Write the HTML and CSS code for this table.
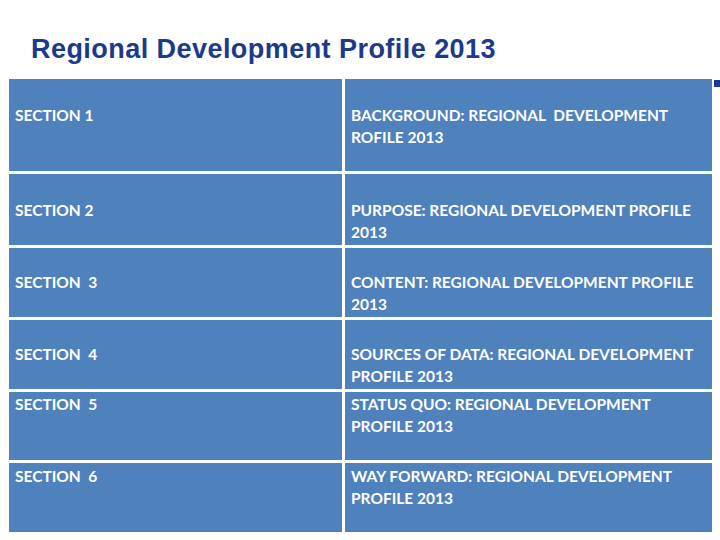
FILE: index.html
```html
<!DOCTYPE html>
<html>
<head>
<meta charset="utf-8">
<link rel="stylesheet" href="styles.css">
</head>
<body>
<div class="slide">
  <h1 class="title">Regional Development Profile 2013</h1>
  <div class="mark"></div>
  <div class="grid">
    <div class="cell r1">SECTION 1</div>
    <div class="cell r1">BACKGROUND: REGIONAL&nbsp; DEVELOPMENT<br>ROFILE 2013</div>
    <div class="cell r2">SECTION 2</div>
    <div class="cell r2">PURPOSE: REGIONAL DEVELOPMENT PROFILE<br>2013</div>
    <div class="cell r3">SECTION&nbsp; 3</div>
    <div class="cell r3">CONTENT: REGIONAL DEVELOPMENT PROFILE<br>2013</div>
    <div class="cell r3">SECTION&nbsp; 4</div>
    <div class="cell r3">SOURCES OF DATA: REGIONAL DEVELOPMENT<br>PROFILE 2013</div>
    <div class="cell r5">SECTION&nbsp; 5</div>
    <div class="cell r5">STATUS QUO: REGIONAL DEVELOPMENT<br>PROFILE 2013</div>
    <div class="cell r6">SECTION&nbsp; 6</div>
    <div class="cell r6">WAY FORWARD: REGIONAL DEVELOPMENT<br>PROFILE 2013</div>
  </div>
</div>
</body>
</html>
```
FILE: styles.css
```css
html, body {
  margin: 0;
  padding: 0;
  background: #ffffff;
}
.slide {
  position: relative;
  width: 720px;
  height: 540px;
  overflow: hidden;
}
.title {
  margin: 0;
  padding: 34px 0 0 31px;
  height: 45px;
  box-sizing: border-box;
  height: 79px;
  font-family: "Liberation Sans", Arial, sans-serif;
  font-weight: bold;
  font-size: 27px;
  letter-spacing: 0.45px;
  line-height: 30px;
  color: #1b3a8c;
}
.mark {
  position: absolute;
  left: 714px;
  top: 80px;
  width: 6px;
  height: 7px;
  background: #163a9a;
}
.grid {
  margin-left: 9px;
  width: 703px;
  display: grid;
  grid-template-columns: 333px 367px;
  grid-template-rows: 92px 71px 69px 69px 68px 69px;
  gap: 3px;
}
.cell {
  background: #4f81bd;
  color: #ffffff;
  font-family: Lato, "Open Sans", sans-serif;
  font-weight: bold;
  font-size: 15.5px;
  line-height: 22px;
  padding-left: 6px;
  box-sizing: border-box;
}
.r1 { padding-top: 25px; }
.r2 { padding-top: 25px; }
.r3 { padding-top: 23px; }
.r5 { padding-top: 1px; }
.r6 { padding-top: 2px; }
```
